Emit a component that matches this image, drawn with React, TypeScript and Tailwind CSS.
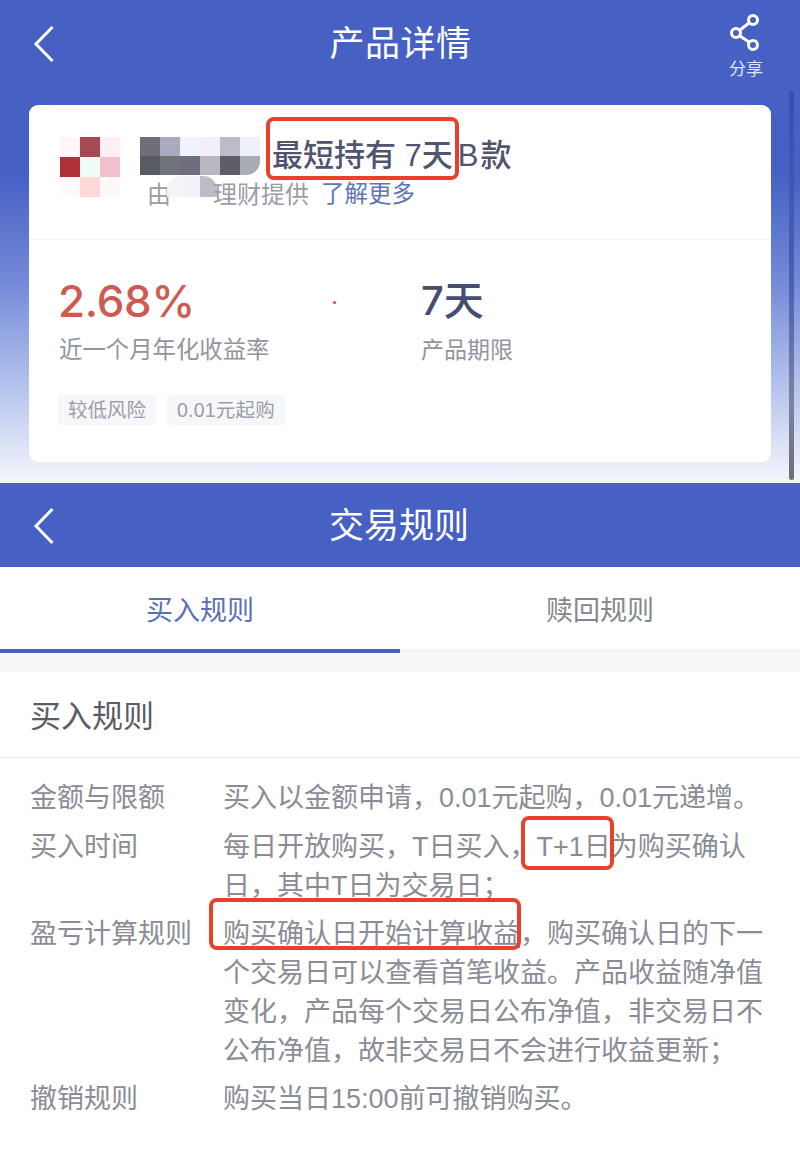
import type { ReactNode } from "react";

const logoCells = ["#fff5fb", "#a54a55", "#ffeef5", "#b03038", "#effcf8", "#f3c0cc", "#fffafc", "#ffd8d8", "#fff9f5"];
const nameCells = [
  "#6f6f78", "#a9aabf", "#eef3fc", "#f2f0f5", "#bcbbca", "#eef2f8",
  "#585a64", "#71737b", "#6f6d80", "#b9b8c2", "#5f5e66", "#a9abb4",
];

function Back() {
  return (
    <svg width="22" height="38" viewBox="0 0 22 38" fill="none" stroke="white" strokeWidth="3" className="block">
      <path d="M19.5 2 L3 19 L19.5 36" />
    </svg>
  );
}

function Share() {
  return (
    <svg width="32" height="38" viewBox="0 0 32 38" fill="none" stroke="white" strokeWidth="3" className="block">
      <circle cx="23" cy="6" r="4.5" />
      <circle cx="6" cy="19" r="4.5" />
      <circle cx="23" cy="31" r="4.5" />
      <path d="M10 16 L19 9 M10 22 L19 28" />
    </svg>
  );
}

// red annotation box drawn over a bit of running text
function Mark({ children, box }: { children: ReactNode; box: string }) {
  return (
    <span className="relative">
      {children}
      <span className={`absolute border-[4px] border-[#e8402a] rounded-[8px] ${box}`} />
    </span>
  );
}

function Rule({ label, children, className = "" }: { label: string; children: ReactNode; className?: string }) {
  return (
    <div className={`flex mb-[10px] ${className}`}>
      <div className="w-[193px] shrink-0 text-[#8a8c96]">{label}</div>
      <div className="flex-1 text-[#8a8c96]">{children}</div>
    </div>
  );
}

export default function App() {
  return (
    <div className="w-[800px] h-[1154px] bg-white overflow-hidden font-['Liberation_Sans','Noto_Sans_CJK_SC',sans-serif]">
      <div className="relative h-[483px] bg-[linear-gradient(180deg,#4660c4_0%,#4660c4_36%,#7389d8_58%,#b4c3ee_80%,#f6f7fc_100%)]">
        <div className="grid grid-cols-[1fr_auto_1fr] items-center h-[105px] pl-[33px] pr-[37px] pb-[18px]">
          <Back />
          <div className="text-[35px] text-white tracking-[0.5px] ml-[5px] mt-[1px]">产品详情</div>
          <div className="flex flex-col items-center justify-self-end mt-[8px]">
            <Share />
            <div className="text-[17px] leading-[22px] mt-[7px] text-[#dfe4f6]">分享</div>
          </div>
        </div>

        <div className="mx-[29px] h-[357px] rounded-[9px] bg-white">
          <div className="h-[135px] border-b border-[#f3f4f7] pl-[31px] pt-[32px] flex">
            <div className="grid grid-cols-3 w-[60px] h-[60px] shrink-0">
              {logoCells.map((c, i) => (
                <div key={i} className="h-[20px]" style={{ backgroundColor: c }} />
              ))}
            </div>
            <div className="ml-[20px]">
              <div className="flex items-center h-[38px]">
                <div className="grid grid-cols-6 w-[120px] h-[38px] shrink-0 rounded-br-[14px] overflow-hidden">
                  {nameCells.map((c, i) => (
                    <div key={i} className="h-[19px]" style={{ backgroundColor: c }} />
                  ))}
                </div>
                <div className="ml-[12px] text-[31px] leading-[38px] font-medium text-[#50546f] whitespace-nowrap">
                  <Mark box="-left-[6px] -right-[6px] -top-[21px] -bottom-[7px]">最短持有 7天</Mark>
                  <span className="ml-[5px]">B</span>
                  <span className="ml-[2px]">款</span>
                </div>
              </div>
              <div className="flex items-center h-[40px] pl-[7px] text-[24px] text-[#9a9ca6] whitespace-nowrap">
                <span>由</span>
                <div className="flex w-[50px] h-[21px] -ml-[4px] -mr-[4px] -mt-[18px] rounded-t-[14px] overflow-hidden">
                  <div className="flex-1 bg-[#f5f5f7]" />
                  <div className="flex-1 bg-[#f0f3fa]" />
                  <div className="flex-1 bg-[#bdbcc4]" />
                </div>
                <span>理财提供</span>
                <span className="ml-[12px] text-[23.5px] text-[#5f74b6]">了解更多</span>
              </div>
            </div>
          </div>

          <div className="pl-[30px] pt-[33px] flex">
            <div className="w-[362px]">
              <div className="font-['Inter','Noto_Sans_CJK_SC',sans-serif] text-[44px] leading-[56px] tracking-[-0.3px] -ml-[1px] text-[#cf5a50] font-medium">2.68%</div>
              <div className="text-[23.4px] leading-[34px] mt-[4px] text-[#92949e]">近一个月年化收益率</div>
            </div>
            <div>
              <div className="font-['Inter','Noto_Sans_CJK_SC',sans-serif] text-[40px] leading-[56px] text-[#454d72] font-medium">7天</div>
              <div className="text-[23px] leading-[34px] mt-[4px] text-[#92949e]">产品期限</div>
            </div>
          </div>

          <div className="flex gap-[11px] ml-[29px] mt-[28px] text-[19.5px] text-[#9b9da7]">
            <div className="h-[30px] px-[10px] leading-[30px] bg-[#f6f7fb] rounded-[3px]">较低风险</div>
            <div className="h-[30px] px-[10px] leading-[30px] bg-[#f6f7fb] rounded-[3px] tracking-[0.2px]">0.01元起购</div>
          </div>
        </div>

        <div className="absolute left-[333px] top-[301px] w-[3px] h-[3px] rounded-full bg-[#e8402a]" />
        <div className="absolute left-[789px] top-[90px] w-[5px] h-[390px] rounded-full bg-[linear-gradient(180deg,#3a4fae_0%,#4a5fb0_50%,#7d83a0_80%,#6b6e78_100%)]" />
      </div>

      <div className="relative flex items-center justify-center h-[84px] bg-[#4660c4]">
        <div className="absolute left-[33px] top-[24px]">
          <Back />
        </div>
        <div className="text-[35px] text-white mt-[3px] mr-[2px]">交易规则</div>
      </div>

      <div className="flex h-[86px] pt-[6px] text-[27px] border-b-[4px] border-[#f4f5f7]">
        <div className="relative w-[400px] flex items-center justify-center text-[#5a6fb8]">
          买入规则
          <div className="absolute left-0 right-0 -bottom-[4px] h-[4px] bg-[#4660c4]" />
        </div>
        <div className="w-[400px] flex items-center justify-center text-[#85878f]">赎回规则</div>
      </div>

      <div className="h-[19px] bg-[#f8f8f9]" />

      <div className="h-[86px] pl-[30px] pt-[6px] flex items-center border-b border-[#ececef] text-[31px] text-[#5a5c66]">买入规则</div>

      <div className="pl-[30px] pt-[21px] text-[27px] leading-[39px] whitespace-nowrap">
        <Rule label="金额与限额">买入以金额申请&#xFF0C;0.01元起购&#xFF0C;0.01元递增。</Rule>
        <Rule label="买入时间">
          每日开放购买&#xFF0C;T日买入&#xFF0C;
          <Mark box="-left-[16px] -right-[3px] -top-[16px] -bottom-[8px]">T+1日</Mark>
          为购买确认
          <br />
          日&#xFF0C;其中T日为交易日&#xFF1B;
        </Rule>
        <Rule label="盈亏计算规则" className="-mt-[1px]">
          <Mark box="-left-[14px] -right-[1px] -top-[21px] -bottom-[1px]">
            <span className="underline decoration-[#7d7f88] underline-offset-[3px]">购买确认日开始计算收益</span>
          </Mark>
          &#xFF0C;购买确认日的下一
          <br />
          个交易日可以查看首笔收益。产品收益随净值
          <br />
          变化&#xFF0C;产品每个交易日公布净值&#xFF0C;非交易日不
          <br />
          公布净值&#xFF0C;故非交易日不会进行收益更新&#xFF1B;
        </Rule>
        <Rule label="撤销规则" className="-mt-[1px]">购买当日15:00前可撤销购买。</Rule>
      </div>
    </div>
  );
}
